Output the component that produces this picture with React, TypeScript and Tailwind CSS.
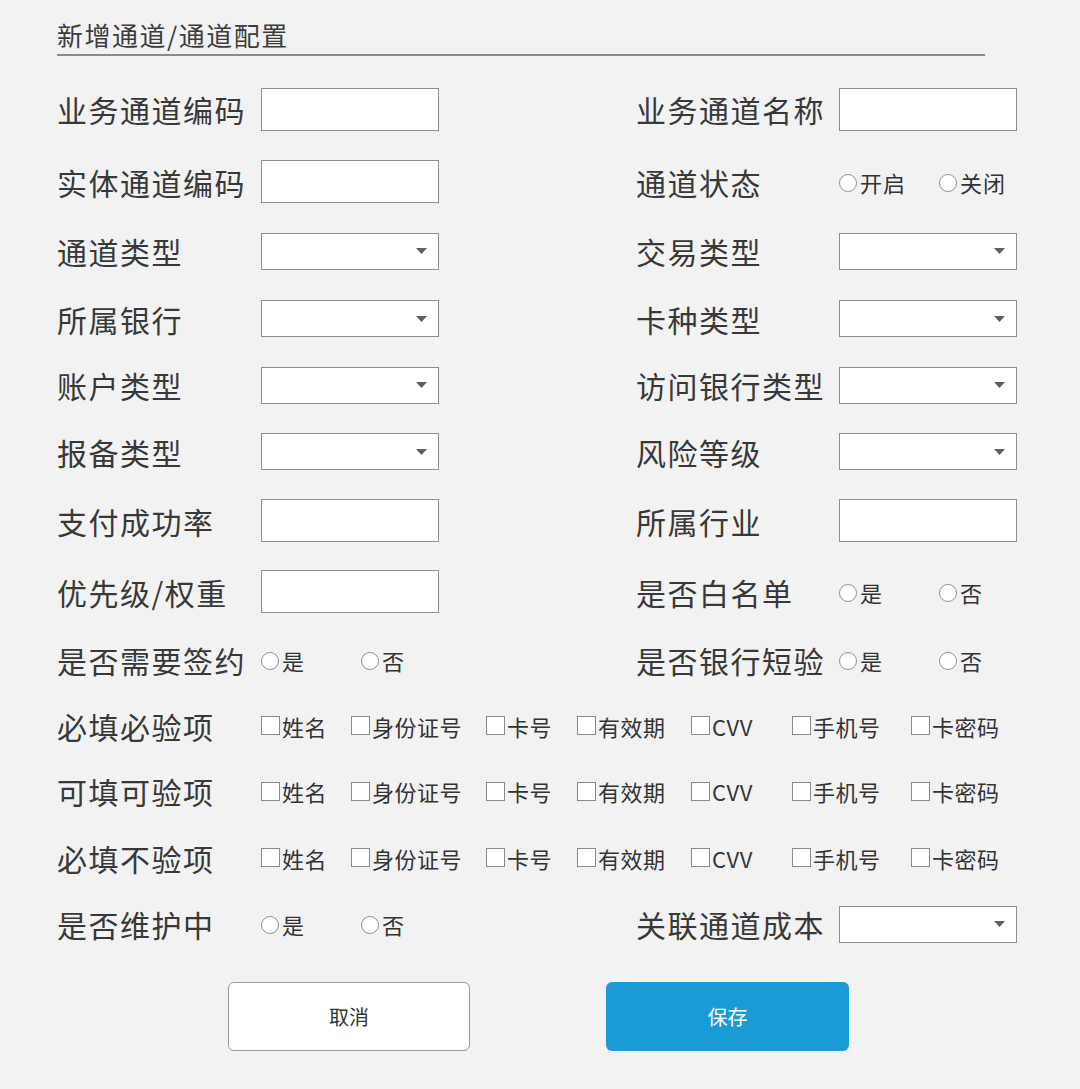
import React from "react";

const FONT = "font-['Noto_Sans_CJK_SC','Noto_Sans',sans-serif]";

const TextBox = () => (
    <div className="w-[178px] h-[43px] bg-white border-[1.5px] border-[#8e8e8e]" />
);

const SelectBox = () => (
    <div className="w-[178px] h-[37px] bg-white border-[1.5px] border-[#8e8e8e] flex items-center justify-end pr-[11px]">
        <svg width="11" height="6" viewBox="0 0 11 6">
            <path d="M0 0 L11 0 L5.5 6 Z" fill="#5f5f5f" />
        </svg>
    </div>
);

const Radio = ({ label }: { label: string }) => (
    <div className="w-[100px] flex items-center">
        <span className="w-[18px] h-[18px] rounded-full bg-white border-[1.5px] border-[#939393] mt-[2px]" />
        <span className="ml-[3px] text-[22px] leading-none tracking-[1px] text-[#333]">{label}</span>
    </div>
);

const Check = ({ label, w }: { label: string; w: string }) => (
    <div className={`${w} flex items-center shrink-0`}>
        <span className="w-[19px] h-[19px] bg-white border-[1.5px] border-[#8a8a8a]" />
        <span className="ml-[2px] text-[22px] leading-none tracking-[0.5px] text-[#333] whitespace-nowrap">{label}</span>
    </div>
);

const Label = ({ text }: { text: string }) => (
    <div className="w-[204px] shrink-0 text-[30px] leading-none tracking-[1.5px] text-[#383838] whitespace-nowrap">{text}</div>
);

const RLabel = ({ text }: { text: string }) => (
    <div className="w-[203px] shrink-0 text-[30px] leading-none tracking-[1.5px] text-[#383838] whitespace-nowrap">{text}</div>
);

const checks = [
    { label: "姓名", w: "w-[90px]" },
    { label: "身份证号", w: "w-[135px]" },
    { label: "卡号", w: "w-[91px]" },
    { label: "有效期", w: "w-[114px]" },
    { label: "CVV", w: "w-[101px]" },
    { label: "手机号", w: "w-[119px]" },
    { label: "卡密码", w: "w-[100px]" },
];

const Pair = ({ children }: { children: React.ReactNode }) => (
    <div className="w-[579px] shrink-0 flex items-center">{children}</div>
);

export default function App() {
    return (
        <div className={`min-h-[1089px] w-[1080px] bg-[#f2f2f2] ${FONT}`}>
            <div className="pl-[57px]">
                <div className="w-[928px] pt-[20px] pb-[4px] border-b-2 border-[#8a8a8a]">
                    <h2 className="text-[26px] leading-[30px] tracking-[1.5px] text-[#3c3c3c]">新增通道/通道配置</h2>
                </div>

                <div className="mt-[16px] flex flex-col">
                    <div className="h-[74px] flex items-center">
                        <Pair><Label text="业务通道编码" /><TextBox /></Pair>
                        <RLabel text="业务通道名称" /><TextBox />
                    </div>
                    <div className="h-[71px] flex items-center">
                        <Pair><Label text="实体通道编码" /><TextBox /></Pair>
                        <RLabel text="通道状态" /><Radio label="开启" /><Radio label="关闭" />
                    </div>
                    <div className="h-[68px] flex items-center">
                        <Pair><Label text="通道类型" /><SelectBox /></Pair>
                        <RLabel text="交易类型" /><SelectBox />
                    </div>
                    <div className="h-[67px] flex items-center">
                        <Pair><Label text="所属银行" /><SelectBox /></Pair>
                        <RLabel text="卡种类型" /><SelectBox />
                    </div>
                    <div className="h-[66px] flex items-center">
                        <Pair><Label text="账户类型" /><SelectBox /></Pair>
                        <RLabel text="访问银行类型" /><SelectBox />
                    </div>
                    <div className="h-[67px] flex items-center">
                        <Pair><Label text="报备类型" /><SelectBox /></Pair>
                        <RLabel text="风险等级" /><SelectBox />
                    </div>
                    <div className="h-[71px] flex items-center">
                        <Pair><Label text="支付成功率" /><TextBox /></Pair>
                        <RLabel text="所属行业" /><TextBox />
                    </div>
                    <div className="h-[71px] flex items-center">
                        <Pair><Label text="优先级/权重" /><TextBox /></Pair>
                        <RLabel text="是否白名单" /><Radio label="是" /><Radio label="否" />
                    </div>
                    <div className="h-[66px] flex items-center">
                        <Pair><Label text="是否需要签约" /><Radio label="是" /><Radio label="否" /></Pair>
                        <RLabel text="是否银行短验" /><Radio label="是" /><Radio label="否" />
                    </div>
                    {["必填必验项", "可填可验项", "必填不验项"].map((t, i) => (
                        <div key={t} className={i === 0 ? "h-[65px] flex items-center" : i === 1 ? "h-[66px] flex items-center" : "h-[67px] flex items-center"}>
                            <Label text={t} />
                            {checks.map((c) => (
                                <Check key={c.label} label={c.label} w={c.w} />
                            ))}
                        </div>
                    ))}
                    <div className="h-[66px] flex items-center">
                        <Pair><Label text="是否维护中" /><Radio label="是" /><Radio label="否" /></Pair>
                        <RLabel text="关联通道成本" /><SelectBox />
                    </div>
                </div>
            </div>

            <div className="mt-[25px] flex pl-[228px] gap-[136px]">
                <button className="w-[242px] h-[69px] rounded-[6px] bg-white border-[1.5px] border-[#9a9a9a] text-[20px] text-[#333]">取消</button>
                <button className="w-[243px] h-[69px] rounded-[6px] bg-[#1a9bd7] text-[20px] text-white">保存</button>
            </div>
        </div>
    );
}
